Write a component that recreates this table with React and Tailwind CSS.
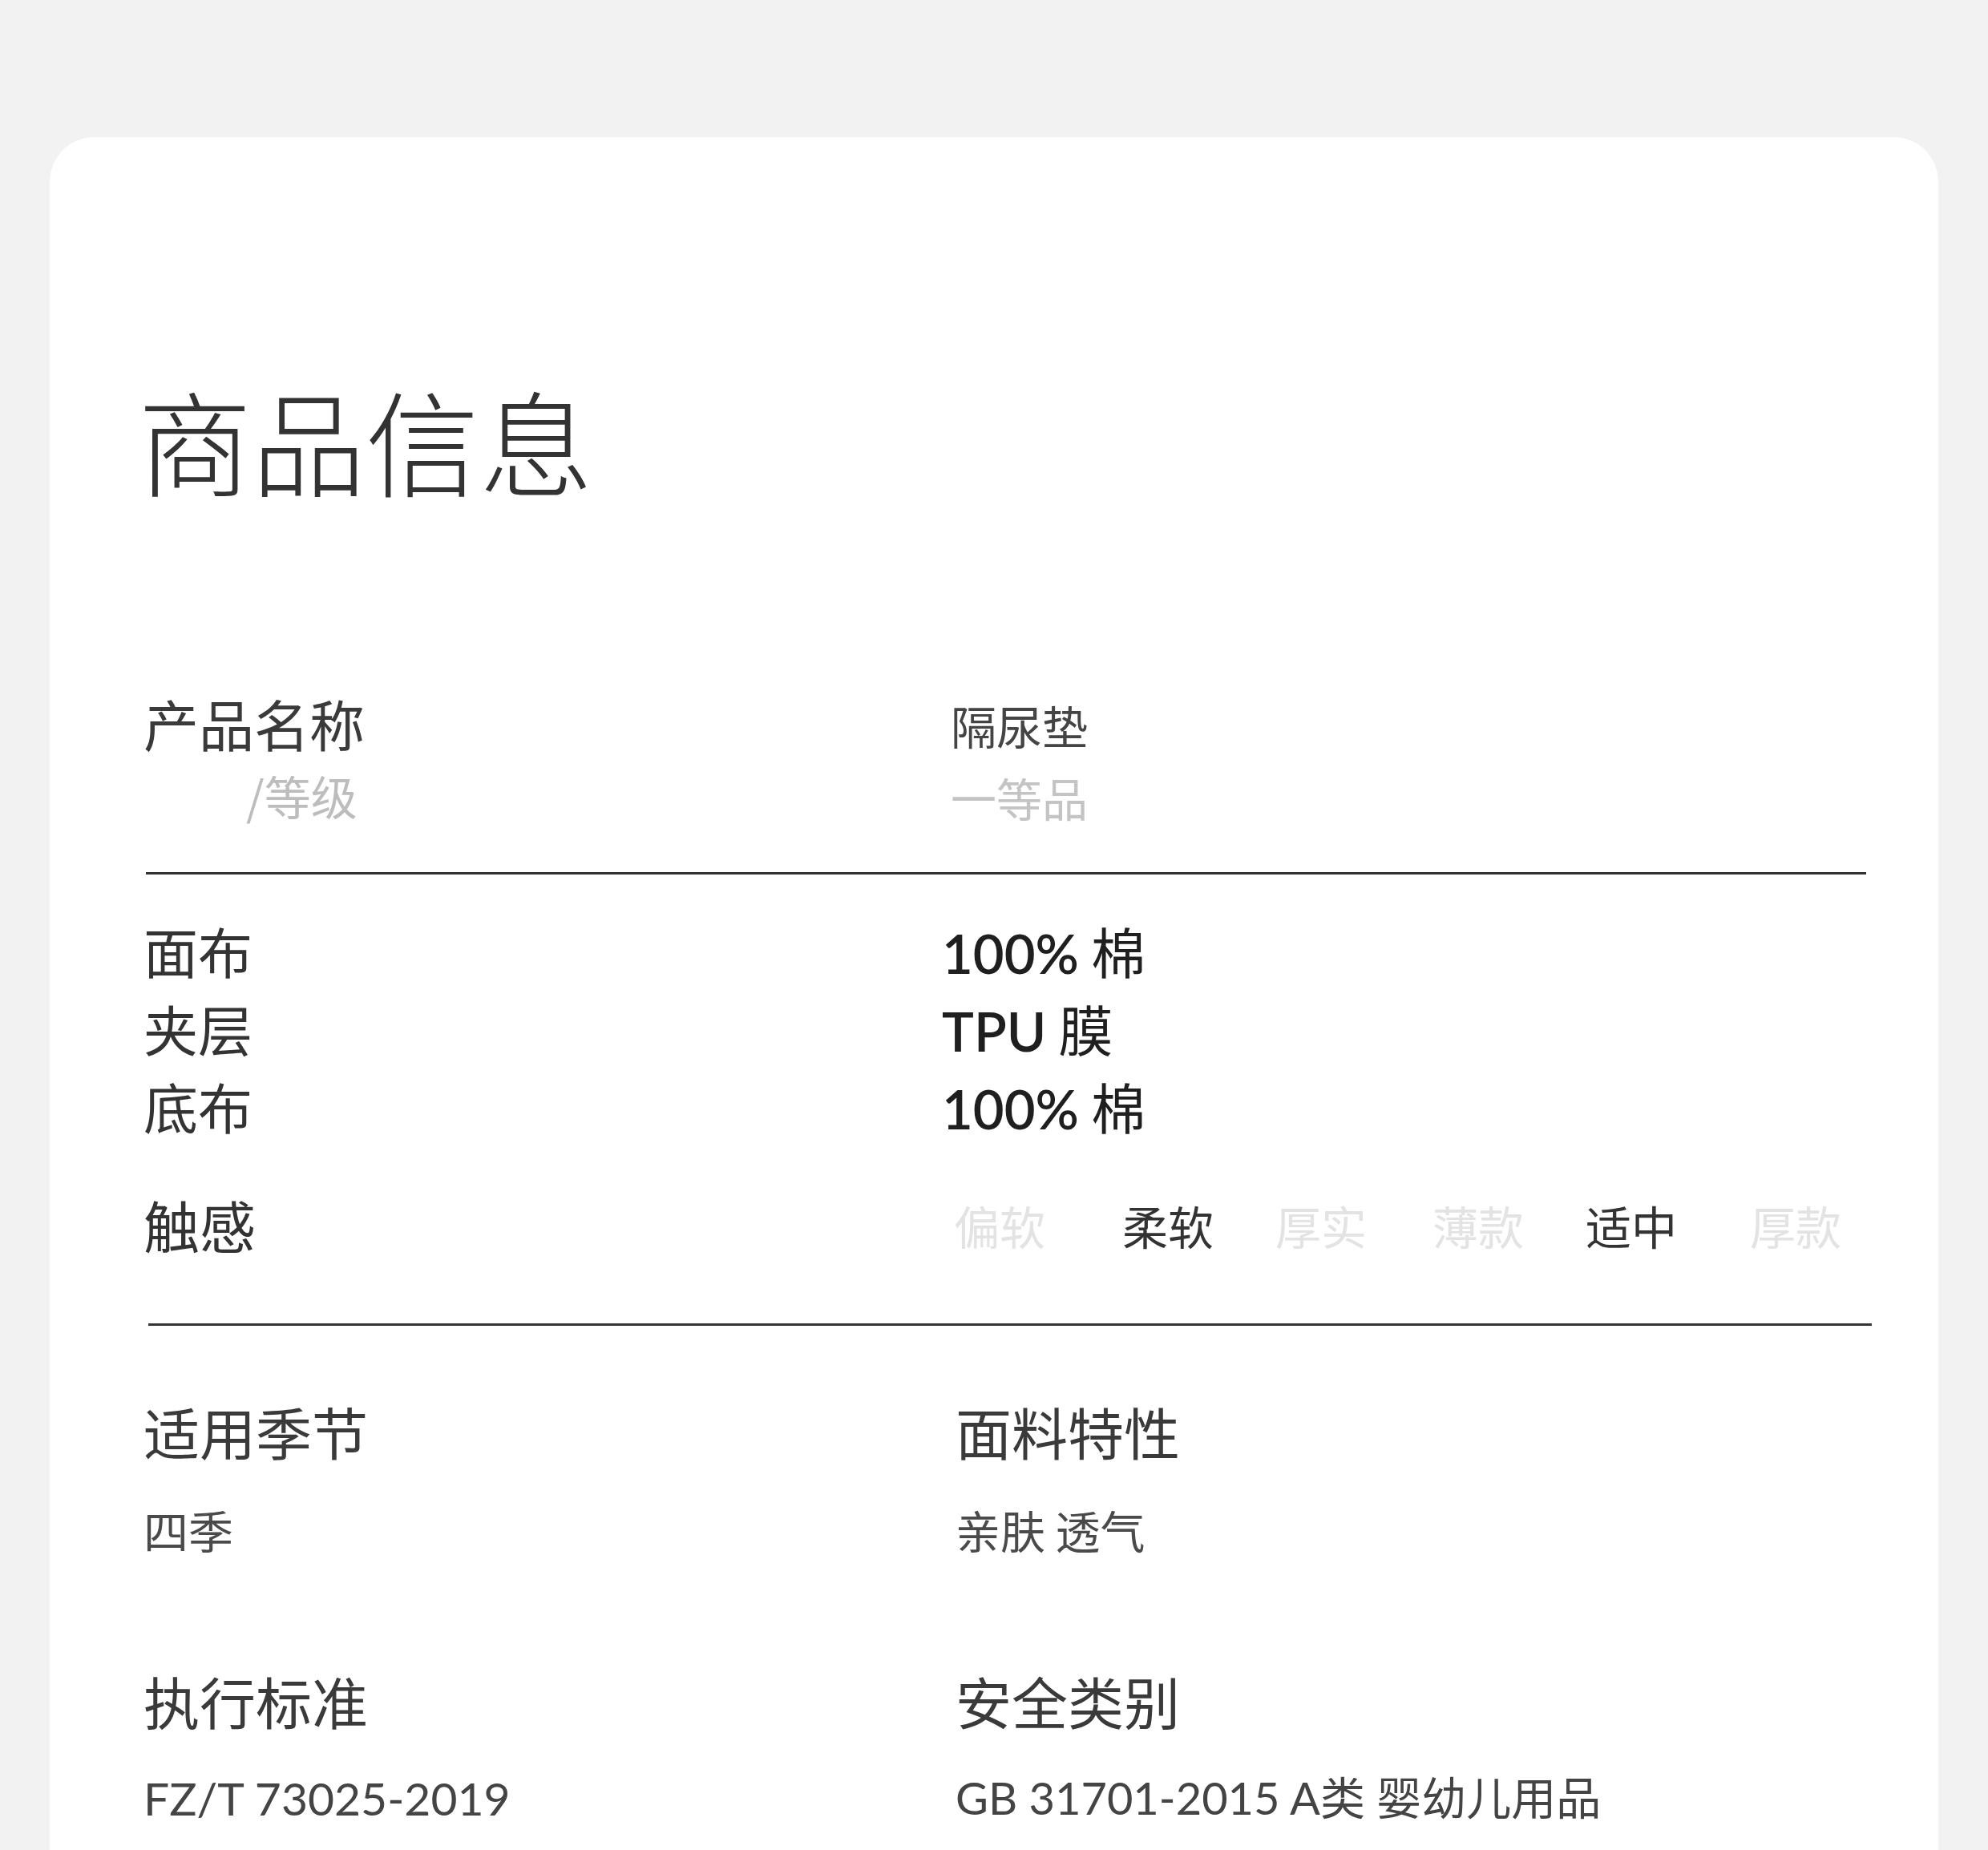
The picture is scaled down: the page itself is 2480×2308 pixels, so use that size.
const materials = [
  ["面布", "100%", "棉"],
  ["夹层", "TPU", "膜"],
  ["底布", "100%", "棉"],
];

// the options in the reference are not spaced evenly, so each keeps its own gap
const feel = [
  { text: "偏软", on: false, gap: "ml-0" },
  { text: "柔软", on: true, gap: "ml-[96px]" },
  { text: "厚实", on: false, gap: "ml-[77px]" },
  { text: "薄款", on: false, gap: "ml-[82px]" },
  { text: "适中", on: true, gap: "ml-[77px]" },
  { text: "厚款", on: false, gap: "ml-[91px]" },
];

function Spec({ title, value, latin, size = "text-[57px]", className = "" }) {
  return (
    <div className={className}>
      <div className="text-[70px] leading-none text-[#3a3a3a]">{title}</div>
      {latin ? (
        <div className={`mt-[58px] ${size} leading-none text-[#444] font-['Lato','Noto_Sans_CJK_SC',sans-serif]`}>
          {value}
        </div>
      ) : (
        <div className="mt-[59px] text-[56px] leading-none text-[#4a4a4a]">{value}</div>
      )}
    </div>
  );
}

export default function App() {
  return (
    <div className="w-[2480px] h-[2308px] overflow-hidden bg-[#f2f2f2] pt-[171px] px-[62px] flex flex-col font-['Noto_Sans_CJK_SC',sans-serif]">
      <div className="flex-1 bg-white rounded-t-[56px] pt-[305px] pl-[117px] pr-[90px]">
        <h1 className="-ml-[7px] text-[142px] leading-none text-[#333] font-light">商品信息</h1>

        {/* 产品名称 / 等级 */}
        <div className="mt-[250px] grid grid-cols-[1007px_1fr]">
          <div>
            <div className="text-[69px] leading-none text-[#3a3a3a]">产品名称</div>
            <div className="mt-[26px] ml-[128px] text-[58px] leading-none text-[#bdbdbd]">/等级</div>
          </div>
          <div className="pt-[8px]">
            <div className="text-[57px] leading-none text-[#444]">隔尿垫</div>
            <div className="mt-[33px] text-[57px] leading-none text-[#c4c4c4]">一等品</div>
          </div>
        </div>

        <div className="mt-[65px] ml-[3px] w-[2146px] h-[3px] bg-[#333]" />

        {/* materials */}
        <div className="mt-[48px]">
          {materials.map(([label, num, han]) => (
            <div key={label} className="grid grid-cols-[1007px_1fr] text-[68px] leading-[94px]">
              <div className="text-[#333]">{label}</div>
              <div className="-ml-[11px] text-[#1f1f1f]">
                <span className="font-['Lato',sans-serif] font-semibold text-[67px]">{num}</span> {han}
              </div>
            </div>
          ))}
        </div>

        {/* 触感 */}
        <div className="mt-[63px] grid grid-cols-[1007px_1fr] items-center">
          <div className="text-[70px] leading-none text-[#333]">触感</div>
          <div className="ml-[4px] flex text-[57px] leading-none">
            {feel.map((f) => (
              <span key={f.text} className={`${f.gap} ${f.on ? "text-[#333]" : "text-[#e3e3e3]"}`}>
                {f.text}
              </span>
            ))}
          </div>
        </div>

        <div className="mt-[88px] ml-[6px] w-[2150px] h-[3px] bg-[#333]" />

        {/* specs */}
        <div className="mt-[97px] grid grid-cols-[1007px_1fr] gap-y-[151px]">
          <Spec title="适用季节" value="四季" />
          <Spec title="面料特性" value="亲肤 透气" className="pl-[6px]" />
          <Spec title="执行标准" value="FZ/T 73025-2019" latin />
          <Spec
            title="安全类别"
            value="GB 31701-2015 A类 婴幼儿用品"
            latin
            size="text-[56px]"
            className="pl-[6px]"
          />
        </div>
      </div>
    </div>
  );
}
